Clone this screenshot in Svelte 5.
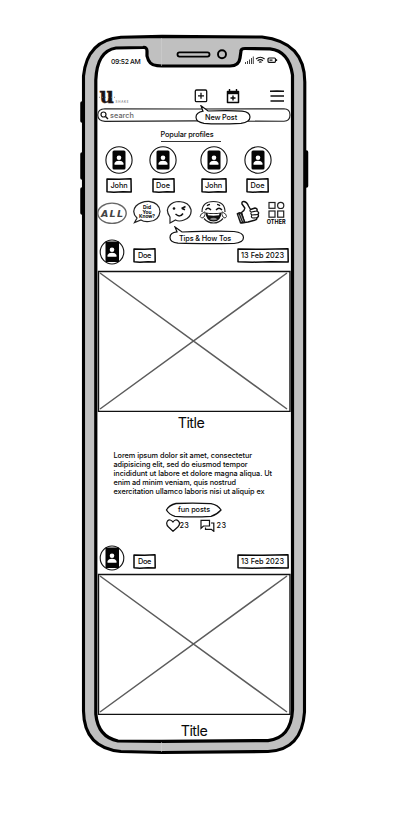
<script>
  const profiles = [
    { name: 'John' },
    { name: 'Doe' },
    { name: 'John' },
    { name: 'Doe' }
  ];
  const lines = [
    ['Lorem ipsum dolor sit amet, consectetur', 138.5],
    ['adipisicing elit, sed do eiusmod tempor', 134],
    ['incididunt ut labore et dolore magna aliqua. Ut', 158.5],
    ['enim ad minim veniam, quis nostrud', 122.5],
    ['exercitation ullamco laboris nisi ut aliquip ex', 151]
  ];
  // Keeps each label at its designed width.
  function fit(node, width) {
    const natural = node.getBoundingClientRect().width;
    node.style.letterSpacing = `${(width - natural) / node.textContent.length}px`;
  }
</script>

{#snippet avatar(r, narrow)}
  <svg class="avatar" width="28" height="28" viewBox="-14 -14 28 28">
    <ellipse rx={r} ry={r + 0.2} fill="#fff" stroke="#111" stroke-width="1.1" />
    <rect x="-6.5" y={narrow ? -10.5 : -9.5} width={narrow ? 13.5 : 13} height={narrow ? 20.5 : 19} rx={narrow ? 0.5 : 1.5} fill="#050505" />
    <circle cx="0" cy="-2.3" r="2.3" fill="#fff" />
    <path d="M-4.5 4.7V3Q-3.5.8 0 .8T4.5 3V4.7Z" fill="#fff" />
  </svg>
{/snippet}

{#snippet tag(text, w, tw, date)}
  <div class="tag" style:width="{w}px" class:date>
    <svg class="frame" viewBox="0 0 {w} 15" width={w} height="15">
      <path d="M1 1L{w / 2} 1.3L{w - 1} .8L{w - 0.8} 13.9L{w * 0.65} 13.7L{w * 0.3} 14.2L1 13.8Z" fill="#fff" stroke="#080808" stroke-width="1.5" stroke-linejoin="round" />
    </svg>
    <span use:fit={tw}>{text}</span>
  </div>
{/snippet}

{#snippet postHeader()}
  <div class="post-head">
    {@render avatar(11.8, true)}
    {@render tag('Doe', 23, 13, false)}
    {@render tag('13 Feb 2023', 52, 43, true)}
  </div>
{/snippet}

{#snippet picture()}
  <svg class="picture" width="194" height="142" viewBox="0 0 194 142">
    <path d="M3 3L190 139M190 3L3 139" stroke="#5c5c5c" stroke-width="1.5" />
    <path d="M1.500 1.500H193V141.500H1.500Z" fill="none" stroke="#111" stroke-width="1.400" />
  </svg>
{/snippet}

<div class="page">
  <svg class="shell" width="417" height="817" viewBox="0 0 417 817">
    <path d="M82 103V121M82 154V178M82 189V213M306.500 152V186" stroke="#000" stroke-width="3.500" stroke-linecap="round" />
    <path d="M121 37.200L162 36.400L262 37Q304.800 42 304.800 82L304.500 712Q302 750 268 751.500L162 752.500L121 751.500Q84 748 83.500 711V76Q87 40 121 37.200Z" fill="#c0c0c0" stroke="#000" stroke-width="3.100" />
    <path d="M116 48L143 47.500Q147 47 147 51V56Q149 65.500 157 65.700L162 66H230Q239 66 240 58L241 51Q241 48.500 245 48.500L270 48.800Q289 51 292.500 75V710Q291 738 268 740.600L162 741.300L118 741Q98 737 95.800 714V80Q97 51 116 48Z" fill="#fff" stroke="#000" stroke-width="3.200" stroke-linejoin="round" />
    <path d="M161.500 38V66M161.500 742V752" stroke="#d2d2d2" stroke-width=".5" />
    <rect x="177.500" y="52.300" width="32" height="4.300" rx="2" fill="#c0c0c0" stroke="#000" stroke-width="1.800" />
    <circle cx="222" cy="54.300" r="4" fill="#c0c0c0" stroke="#000" stroke-width="1.900" />
  </svg>

  <main>
    <div class="status">
      <span use:fit={29.5}>09:52 AM</span>
      <svg width="34" height="10" viewBox="0 0 34 10" fill="none" stroke="#111">
        <path d="M1.500 9V7M3.500 9V6M5.500 9V4.500M7.500 9V3M9.300 9V1.500" stroke-width=".8" />
        <path d="M12 4Q16.300 .5 20.600 4M13.600 5.700Q16.300 3.500 19 5.700M15 7.400Q16.300 6.400 17.600 7.400" stroke-width="1.100" />
        <rect x="24" y="3" width="7.500" height="4.300" rx="1" stroke-width="1.200" /><path d="M25.500 5.100H28.500M32.500 4.200V6" stroke-width="1.300" />
      </svg>
    </div>

    <header>
      <div class="logo">
        <svg width="38" height="19" viewBox="0 0 38 19">
          <text x="2.500" y="14.800" textLength="14.500" lengthAdjust="spacingAndGlyphs" class="u">u</text>
          <path d="M2 9.300H20" stroke="#777" stroke-width=".8" stroke-dasharray="1 2" />
          <text x="18.500" y="14.500" textLength="13" class="sub">SHAKE</text>
        </svg>
      </div>
      <svg class="add" width="14" height="14" viewBox="0 0 14 14" fill="none" stroke="#111"><rect x="1.300" y="1" width="11.400" height="11.600" rx="1.200" stroke-width="1.300" /><path d="M7 3.800V9.800M4 6.800H10" stroke-width="1.300" /></svg>
      <svg class="cal" width="14" height="15" viewBox="0 0 14 15" fill="none" stroke="#080808"><path d="M1.500 2.500H12.500V13.500H1.500Z" stroke-width="1.500" stroke-linejoin="round" /><path d="M1.500 3.700H12.500" stroke-width="3" /><path d="M3.500 0V3M10.500 0V3M7 6.500V11.500M4.500 9H9.500" stroke-width="1.400" /></svg>
      <svg class="menu" width="15" height="13" viewBox="0 0 15 13" stroke="#111" stroke-width="1.400"><path d="M0 1.300L7 1L14 1.300M.5 6H14M.5 11H14" fill="none" /></svg>
    </header>

    <div class="search">
      <svg class="outline" width="195" height="15" viewBox="0 0 195 15"><path d="M8 .7L98 1L187 .8Q193 1 193 7T187 13.300L97 12.900L8 13.400Q.8 13 .8 7T8 .7Z" fill="none" stroke="#222" stroke-width="1.100" /></svg>
      <svg class="lens" width="9" height="9" viewBox="0 0 9 9" fill="none" stroke="#111"><circle cx="3.500" cy="3.500" r="2.500" stroke-width="1.200" /><path d="M5.500 5.500L8 8" stroke-width="1.400" /></svg>
      <span use:fit={24}>search</span>
      <div class="bubble new">
        <svg width="57" height="20" viewBox="0 0 57 20"><path d="M6 .8L13 6Q35 5 47 6.200Q55 7 55 12T46 18.300Q22 19.500 9 18.300Q1 17 1 12.300T8 6.200Z" fill="#fff" stroke="#111" stroke-width="1.200" /></svg>
        <span use:fit={32}>New Post</span>
      </div>
    </div>

    <h2><span use:fit={53}>Popular profiles</span></h2>
    <div class="profiles">
      {#each profiles as p}
        <div class="profile">
          {@render avatar(13.1, false)}
          {@render tag(p.name, p.name === 'John' ? 26 : 23, p.name === 'John' ? 17 : 14, false)}
        </div>
      {/each}
    </div>

    <div class="topics">
      <svg width="30" height="24" viewBox="0 0 30 24"><ellipse cx="15" cy="13.300" rx="14.200" ry="10.200" fill="#fff" stroke="#666" stroke-width="1.400" /><text x="15" y="17" text-anchor="middle" textLength="22" class="all">ALL</text></svg>
      <svg class="facts" width="28" height="24" viewBox="0 0 28 24"><path d="M4 18Q-2 12 3 6Q8 1 16 1.300Q27 3 27 11.500Q26 21 16 21.500Q11 22 8 20L1.500 22.500Z" fill="#fff" stroke="#222" stroke-width="1.200" /><g class="know"><text x="14" y="8.800" textLength="8">Did</text><text x="14" y="13.600" textLength="9">You</text><text x="14" y="18.300" textLength="16">Know?</text></g></svg>
      <svg class="wink" width="26" height="24" viewBox="0 0 26 24"><path d="M4 17Q-1 10 3.500 5.500Q7 1.500 13 1.500Q23 2 25 9.500Q26 17 18 20Q13 22 9.500 20L4 23Z" fill="#fff" stroke="#222" stroke-width="1.200" /><circle cx="8" cy="8.500" r="1.300" fill="#111" /><path d="M15.500 8.500L19.500 6.500M16 8.500L19 9.700M9.500 14Q14 18 17 13.500" fill="none" stroke="#111" stroke-width="1.500" /></svg>
      <svg class="laugh" width="28" height="24" viewBox="0 0 28 24"><path d="M3 12Q3 1.500 14.500 1.500T26 12M5 18.500Q9 23 14.500 23T24 18.500" fill="none" stroke="#222" stroke-width="1.200" /><path d="M6.500 10Q9 6.500 12 10M17 10Q20 6.500 23 10M8 5.800Q9 4.500 11 4.300M18 4.300Q20 4.500 21 5.800" fill="none" stroke="#111" stroke-width="1.300" /><path d="M6.500 12.500Q14.500 14 22.500 12.500Q22 21.500 14.500 21.500T6.500 12.500Z" fill="#111" /><path d="M8.500 13.600Q14.500 14.600 20.500 13.600L20 15.300Q14.500 16 9 15.300Z" fill="#fff" /><path d="M10.500 19.200Q14.500 16.500 18.500 19.200Q14.500 21.500 10.500 19.200Z" fill="#888" /><path d="M6 11.800Q.8 14 1.200 16.500Q2.500 19.500 5 17Q6.500 15 6 11.800ZM23 11.800Q28 14 27.500 16.500Q26.500 19.500 24 17Q22.500 15 23 11.800Z" fill="#fff" stroke="#333" /></svg>
      <svg class="thumb" width="25" height="25" viewBox="0 0 25 25"><path d="M6.500 12.500Q10 10 9.800 8L7 4Q6.500 1.300 9 1.500Q12 2 13.500 6L15.500 9.500L20 8Q22.800 8.500 22 11Q24.500 12.300 23 14.500Q24.300 16.500 22 17.800Q22 20 19.500 20.300L13 22L9.500 22.500Z" fill="#fff" stroke="#111" stroke-width="1.400" stroke-linejoin="round" /><path d="M1.500 13.500Q4 11 6.800 12.500L10.500 22.500Q8 24.500 5 23.500Z" fill="#151515" /><path d="M16.500 12L22 11M17 15L23 14.500M17.500 18L22 17.800M15.500 9.500Q14 11.500 16.500 12Q15 13.800 17 15Q15.500 16.800 17.500 18" fill="none" stroke="#111" stroke-width="1.100" /><path d="M3.500 14.500L6.500 22M5.300 13.800L8.300 21.500" stroke="#fff" stroke-width=".6" /></svg>
      <svg class="more" width="22" height="25" viewBox="0 0 22 25"><g fill="none" stroke="#222" stroke-width="1.200"><rect x="3" y="2.500" width="6" height="5.800" /><circle cx="14.700" cy="5.400" r="3.100" /><rect x="3" y="11" width="6" height="6.200" /><rect x="11.700" y="11" width="6" height="6.200" /></g><text x=".7" y="24.400" textLength="19" class="other">OTHER</text></svg>
      <div class="bubble tips">
        <svg width="76" height="20" viewBox="0 0 76 20"><path d="M6 1L13 6Q48 4.500 65 5.500Q74.500 6.500 74.500 11.500T65 17.500Q32 18 9 17.200Q1 16.500 1 11.500T8 5.800Z" fill="#fff" stroke="#111" stroke-width="1.200" /></svg>
        <span use:fit={52}>Tips &amp; How Tos</span>
      </div>
    </div>

    <article>
      {@render postHeader()}
      {@render picture()}
      <h1><span use:fit={26.5}>Title</span></h1>
      <div class="copy">
        {#each lines as [line, width]}
          <p><span use:fit={width}>{line}</span></p>
        {/each}
      </div>
      <div class="fun">
        <svg class="outline" width="58" height="16" viewBox="0 0 58 16"><path d="M11 1.500Q30 .5 46 1.700Q53 3 56 8Q52 12.500 46 14.300Q28 15.500 10 14.300Q4 12.500 1.500 8Q4 3 11 1.500Z" fill="#fff" stroke="#111" stroke-width="1.300" /></svg>
        <span use:fit={32}>fun posts</span>
      </div>
      <div class="reactions">
        <svg width="15" height="13" viewBox="0 0 15 13"><path d="M7 3Q4-.5 1.500 2Q-.5 5 2.500 8L7 12.300L11.800 8Q15 4.500 12.300 2Q9.500-.5 7 3Z" fill="none" stroke="#111" stroke-width="1.200" /></svg>
        <span use:fit={8.5}>23</span>
        <svg class="chat" width="15" height="13" viewBox="0 0 15 13"><path d="M1 1.300H9.500V7H3.500L1 9.300ZM11 4H13.800V12.300L11.300 10.300H5.500V8.500" fill="none" stroke="#111" stroke-width="1.200" /></svg>
        <span class="count" use:fit={9}>23</span>
      </div>
    </article>

    <article class="second">
      {@render postHeader()}
      {@render picture()}
      <h1><span use:fit={26.5}>Title</span></h1>
    </article>
  </main>
</div>

<style>
  :global(body) { margin: 0; background: #fff; }
  .page { position: relative; width: 417px; height: 817px; overflow: hidden; font-family: Inter, "Liberation Sans", sans-serif; font-size: 7.3px; line-height: 9px; color: #080808; font-weight: 450; }
  .page span { white-space: nowrap; }
  svg { display: block; flex: none; }
  .shell { position: absolute; inset: 0; }
  main { position: relative; box-sizing: border-box; width: 195px; height: 817px; margin-left: 97px; padding-top: 55px; display: flex; flex-direction: column; }
  main > *, article > * { flex: none; }
  .status { height: 33px; display: flex; justify-content: space-between; padding: 0 14.500px 0 14px; }
  .status > span { padding-top: 2px; font-size: 6.800px; }
  header { height: 20px; display: flex; box-sizing: border-box; }
  .logo { width: 96.500px; height: 19px; }
  .u { font: 700 23px "DejaVu Serif", serif; fill: #1c1314; stroke: #1c1314; stroke-width: .5px; }
  .sub { font: 3px Inter, sans-serif; fill: #555; }
  .add { margin-top: 1px; }
  .cal { margin-left: 18.500px; margin-top: 1px; }
  .menu { margin-left: 30px; margin-top: 1.500px; }
  .search { position: relative; height: 15px; display: flex; align-items: center; }
  .outline { position: absolute; left: 0; top: 0; }
  .lens { margin: 0 1px 1px 3px; }
  .search > span { color: #666; padding-bottom: 1px; }
  .bubble { position: absolute; z-index: 1; }
  .bubble svg { position: absolute; left: 0; top: 0; }
  .bubble span { position: relative; }
  .new { left: 98px; top: -3px; padding: 8px 10px; }
  h2 { box-sizing: border-box; width: 60.500px; height: 12px; margin: 7px 0 4px 63.500px; border-bottom: 1px solid #333; font: inherit; }
  .profiles { display: flex; height: 48px; padding-left: 8px; }
  .profile { width: 28px; display: flex; flex-direction: column; align-items: center; margin-right: 16px; }
  .profile:nth-child(2) { margin-right: 22.500px; }
  .profile .tag { margin-top: 4px; }
  .tag { position: relative; height: 15px; display: flex; align-items: center; justify-content: center; flex: none; }
  .frame { position: absolute; left: 0; top: 0; }
  .tag span { position: relative; }
  .topics { position: relative; display: flex; height: 38px; margin-top: 6px; }
  .facts { margin-left: 6px; }
  .wink { margin-left: 4.500px; }
  .laugh { margin-left: 7px; }
  .thumb { margin-left: 8.500px; }
  .more { margin-left: 6px; }
  .all { font: italic 700 9.500px "DejaVu Sans", sans-serif; fill: #444; }
  .know { font: 700 4.800px Inter, sans-serif; text-anchor: middle; }
  .other { font: 700 5.500px Inter, sans-serif; }
  .tips { left: 72px; top: 26px; padding: 8px 10px; }
  article { display: flex; flex-direction: column; height: 306px; }
  .post-head { display: flex; height: 32px; padding-left: 1px; }
  .post-head .tag { margin: 10px 0 0 7px; }
  .post-head .date { margin-left: 80.500px; }
  h1 { margin: 2px 0 0; width: 188px; text-align: center; font: 400 14.300px/18px Inter, "Liberation Sans", sans-serif; }
  .copy { margin: 19px 0 0 16.500px; height: 45px; }
  p { margin: 0; height: 9px; }
  .fun { position: relative; width: 58px; height: 16px; margin: 6px 0 0 68px; display: flex; align-items: center; justify-content: center; }
  .fun span { position: relative; top: -.5px; }
  .reactions { display: flex; align-items: center; height: 13px; margin: .5px 0 0 68.500px; }
  .reactions > span { width: 8px; }
  .reactions > :nth-child(2) { margin-left: -1px; }
  .chat { margin-left: 12px; }
  .reactions > .count { margin-left: 2px; }
  .second { height: 200px; }
  .second .post-head { height: 28px; }
  .second .picture { margin-top: .5px; }
  .second h1 { width: 194px; margin-top: 7.500px; }
</style>
